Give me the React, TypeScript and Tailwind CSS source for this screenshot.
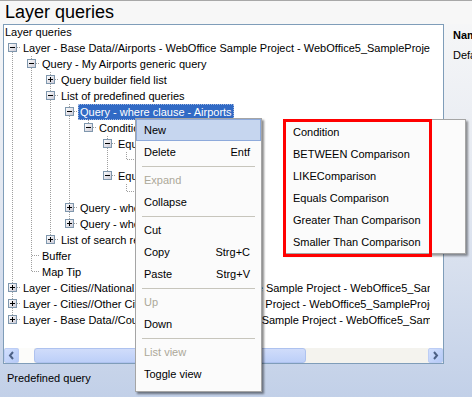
type Node = {
  label: string;
  expanded?: boolean;
  selected?: boolean;
  hasChildren?: boolean;
  children?: Node[];
};

type Row = {
  label: string;
  level: number;
  last: boolean;
  first: boolean;
  guides: boolean[];
  hasChildren: boolean;
  expanded: boolean;
  selected: boolean;
};

const tree: Node[] = [
  {
    label: 'Layer - Base Data//Airports - WebOffice Sample Project - WebOffice5_SampleProject',
    expanded: true,
    children: [
      {
        label: 'Query - My Airports generic query',
        expanded: true,
        children: [
          { label: 'Query builder field list', hasChildren: true },
          {
            label: 'List of predefined queries',
            expanded: true,
            children: [
              {
                label: 'Query - where clause - Airports',
                expanded: true,
                selected: true,
                children: [
                  {
                    label: 'Condition',
                    expanded: true,
                    children: [
                      { label: 'Equals Comparison', expanded: true, children: [{ label: 'NAME' }] },
                      { label: 'Equals Comparison', expanded: true, children: [{ label: 'IATA' }] },
                    ],
                  },
                ],
              },
              { label: 'Query - where clause - Cities', hasChildren: true },
              { label: 'Query - where clause - Countries', hasChildren: true },
            ],
          },
          { label: 'List of search results', hasChildren: true },
        ],
      },
      { label: 'Buffer' },
      { label: 'Map Tip' },
    ],
  },
  { label: 'Layer - Cities//National Capital Cities - WebOffice Sample Project - WebOffice5_SampleProject', hasChildren: true },
  { label: 'Layer - Cities//Other Cities 1 - WebOffice Sample Project - WebOffice5_SampleProject', hasChildren: true },
  { label: 'Layer - Base Data//Country Borders - WebOffice Sample Project - WebOffice5_SampleProject', hasChildren: true },
];

function flatten(nodes: Node[], level: number, guides: boolean[], out: Row[]) {
  nodes.forEach((n, i) => {
    const last = i === nodes.length - 1;
    const hasKids = !!(n.children && n.children.length) || !!n.hasChildren;
    out.push({
      label: n.label,
      level,
      last,
      first: level === 0 && i === 0,
      guides,
      hasChildren: hasKids,
      expanded: !!n.expanded,
      selected: !!n.selected,
    });
    if (n.children && n.expanded) flatten(n.children, level + 1, [...guides, !last], out);
  });
}

const rows: Row[] = [];
flatten(tree, 0, [], rows);

const dot = { stroke: '#a0a0a0', strokeWidth: 1, strokeDasharray: '1 1', shapeRendering: 'crispEdges' as const };

function Guide({ on }: { on: boolean }) {
  return (
    <svg width="19" height="16" className="shrink-0">
      {on && <line x1="8.5" y1="0" x2="8.5" y2="16" {...dot} />}
    </svg>
  );
}

function Connector({ row }: { row: Row }) {
  return (
    <svg width="17" height="16" className="shrink-0">
      <defs>
        <linearGradient id="exp" x1="0" y1="0" x2="1" y2="1">
          <stop offset="0" stopColor="#ffffff" />
          <stop offset="1" stopColor="#c9c8d4" />
        </linearGradient>
      </defs>
      {!row.first && <line x1="8.5" y1="0" x2="8.5" y2="8" {...dot} />}
      {!row.last && <line x1="8.5" y1="8" x2="8.5" y2="16" {...dot} />}
      <line x1="9" y1="7.5" x2="17" y2="7.5" {...dot} />
      {row.hasChildren && (
        <g shapeRendering="crispEdges">
          <rect x="4.5" y="3.5" width="8" height="8" fill="url(#exp)" stroke="#7f97ad" />
          <line x1="6" y1="7.5" x2="11" y2="7.5" stroke="#000" />
          {!row.expanded && <line x1="8.5" y1="5" x2="8.5" y2="10" stroke="#000" />}
        </g>
      )}
    </svg>
  );
}

type MenuItem = { label: string; sc?: string; dis?: boolean; hl?: boolean } | 'sep';

const menu: MenuItem[] = [
  { label: 'New', hl: true },
  { label: 'Delete', sc: 'Entf' },
  'sep',
  { label: 'Expand', dis: true },
  { label: 'Collapse' },
  'sep',
  { label: 'Cut' },
  { label: 'Copy', sc: 'Strg+C' },
  { label: 'Paste', sc: 'Strg+V' },
  'sep',
  { label: 'Up', dis: true },
  { label: 'Down' },
  'sep',
  { label: 'List view', dis: true },
  { label: 'Toggle view' },
];

const subItems = [
  'Condition',
  'BETWEEN Comparison',
  'LIKEComparison',
  'Equals Comparison',
  'Greater Than Comparison',
  'Smaller Than Comparison',
];

function Arrow({ dir }: { dir: 'left' | 'right' }) {
  return (
    <div className="w-[15px] h-[15px] shrink-0 rounded-[2px] border border-[#bccdf5] bg-gradient-to-br from-[#d3e0fd] to-[#b4c9f7] flex items-center justify-center">
      <svg width="7" height="9" viewBox="0 0 7 9">
        <path
          d={dir === 'left' ? 'M5 1 L2 4.5 L5 8' : 'M2 1 L5 4.5 L2 8'}
          fill="none"
          stroke="#4d6185"
          strokeWidth="2"
        />
      </svg>
    </div>
  );
}

export default function App() {
  return (
    <div className="relative w-[472px] h-[397px] overflow-hidden bg-gradient-to-b from-[#f8f8f8] via-[#e3e8f1] to-[#c2d0e8] font-['Liberation_Sans',Arial,sans-serif] text-[11px] text-black">
      {/* Title */}
      <div className="h-[24px] border-t border-[#a8a8a8] pl-[5px] text-[18px] leading-[22px] bg-[#f7f7f7]">
        Layer queries
      </div>

      <div className="flex">
        {/* Tree box */}
        <div className="ml-[3px] w-[441px] h-[340px] shrink-0 border border-[#7f9db9] bg-white flex flex-col">
          <div className="flex-1 w-[426px] overflow-hidden">
            <div className="h-[15px] leading-[15px] pl-[1px] whitespace-nowrap">Layer queries</div>
            {rows.map((r, i) => (
              <div key={i} className="flex h-[16px] items-center whitespace-nowrap">
                {r.guides.map((g, j) => (
                  <Guide key={j} on={g} />
                ))}
                <Connector row={r} />
                <span
                  className={
                    r.selected
                      ? 'h-[16px] leading-[16px] px-[2px] bg-[#316ac5] text-white outline outline-1 outline-dotted -outline-offset-1 outline-[#9db5e0]'
                      : 'h-[16px] leading-[16px] px-[2px]'
                  }
                >
                  {r.label}
                </span>
              </div>
            ))}
          </div>
          {/* Horizontal scrollbar */}
          <div className="h-[15px] flex bg-[#f4f3ee]">
            <Arrow dir="left" />
            <div className="w-[15px] bg-[#fcfcfa]" />
            <div className="w-[272px] rounded-[3px] border border-[#aec2ef] bg-gradient-to-b from-[#d0dcfa] to-[#bccff8]" />
            <div className="flex-1" />
            <Arrow dir="right" />
          </div>
        </div>

        {/* Right property panel */}
        <div className="pl-[9px] pt-[4px] whitespace-nowrap">
          <div className="leading-[14px] font-bold">Name</div>
          <div className="leading-[14px] mt-[6px]">Default</div>
        </div>
      </div>

      <div className="pl-[7px] pt-[6px] leading-[16px]">Predefined query</div>

      {/* Context menu */}
      <div className="absolute left-[135px] top-[118px] w-[127px] border border-[#a5a5a5] bg-[#fbfbfb] pb-[6px] shadow-[2px_2px_2px_rgba(0,0,0,0.45)]">
        {menu.map((m, i) =>
          m === 'sep' ? (
            <div key={i} className="h-[6px] flex items-center px-[6px]">
              <div className="h-px w-full bg-[#c7c5bc]" />
            </div>
          ) : (
            <div
              key={i}
              className={
                m.hl
                  ? 'h-[22px] flex items-center justify-between pl-[7px] pr-[10px] border border-[#8eaadb] bg-[#c6d6ef]'
                  : 'h-[22px] flex items-center justify-between pl-[7px] pr-[10px] border border-transparent'
              }
            >
              <span className={m.dis ? 'text-[#aca899]' : ''}>{m.label}</span>
              {m.sc && <span>{m.sc}</span>}
            </div>
          )
        )}
      </div>

      {/* Sub menu */}
      <div className="absolute left-[283px] top-[119px] w-[183px] h-[135px] border border-[#a5a5a5] bg-[#fbfbfb] pt-[1px] shadow-[2px_2px_2px_rgba(0,0,0,0.4)]">
        {subItems.map((s) => (
          <div key={s} className="h-[22px] flex items-center pl-[9px] whitespace-nowrap">
            {s}
          </div>
        ))}
      </div>

      {/* Red annotation frame */}
      <div className="absolute left-[283px] top-[119px] w-[149px] h-[138px] border-[3px] border-[#ff0000]" />
    </div>
  );
}
